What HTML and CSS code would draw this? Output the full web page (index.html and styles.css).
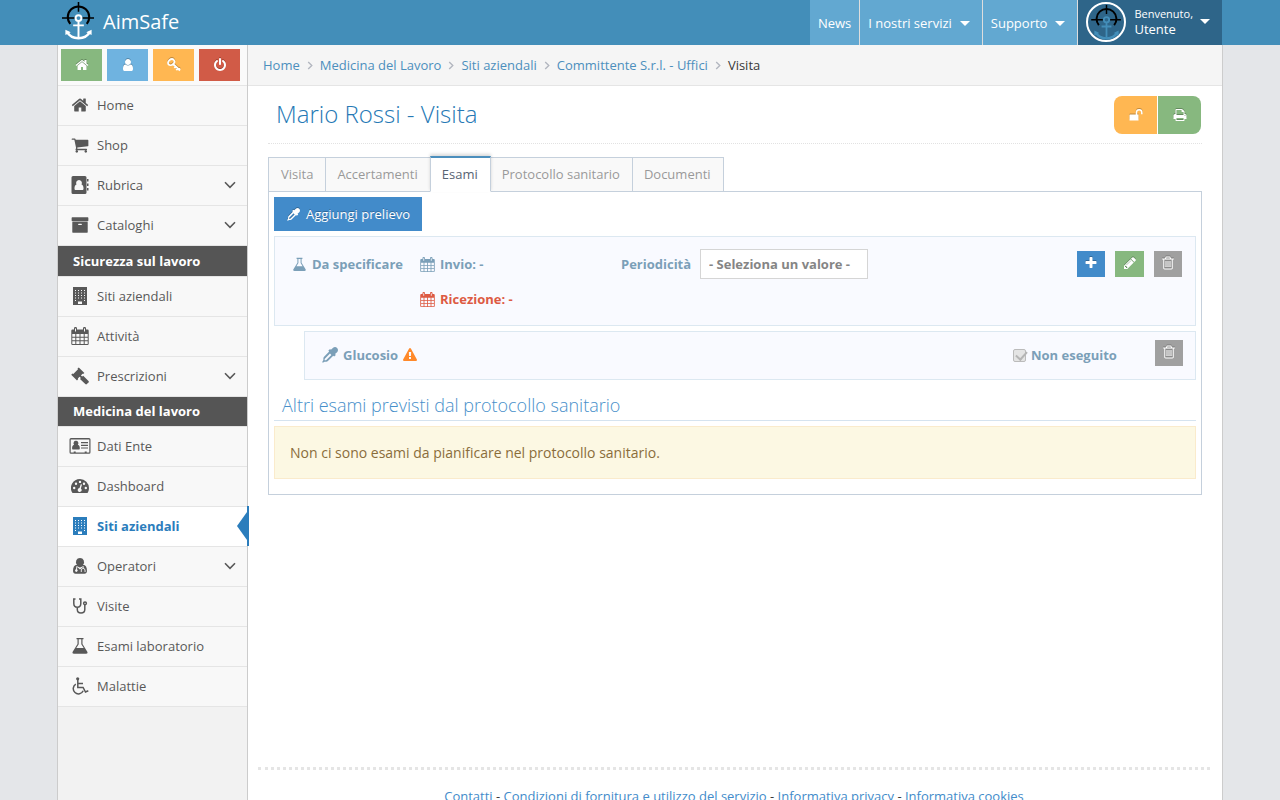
FILE: index.html
```html
<!DOCTYPE html>
<html lang="it">
<head>
<meta charset="utf-8">
<meta name="viewport" content="width=device-width, initial-scale=1">
<title>AimSafe - Visita</title>
<link rel="stylesheet" href="styles.css">
</head>
<body>
<svg class="sprite" aria-hidden="true">
  <symbol id="i-home" viewBox="0 0 1792 1792"><path d="M1472 992v480q0 26-19 45t-45 19h-384v-384h-256v384h-384q-26 0-45-19t-19-45v-480q0-1 .5-3t.5-3l575-474 575 474q1 2 1 6zm223-69l-62 74q-8 9-21 11h-3q-13 0-21-7l-692-577-692 577q-12 8-24 7-13-2-21-11l-62-74q-8-10-7-23.5t11-21.5l719-599q32-26 76-26t76 26l244 204v-195q0-14 9-23t23-9h192q14 0 23 9t9 23v408l219 182q10 8 11 21.5t-7 23.5z"/></symbol>
  <symbol id="i-user" viewBox="0 0 1792 1792"><path d="M1536 1399q0 109-62.5 187t-150.5 78h-854q-88 0-150.5-78t-62.5-187q0-85 8.5-160.5t31.5-152 58.5-131 94-89 134.5-34.5q131 128 313 128t313-128q76 0 134.5 34.5t94 89 58.5 131 31.5 152 8.5 160.5zm-256-887q0 159-112.5 271.5t-271.5 112.5-271.5-112.5-112.5-271.5 112.5-271.5 271.5-112.5 271.5 112.5 112.5 271.5z"/></symbol>
  <symbol id="i-key" viewBox="0 0 14 14"><g fill="none" stroke="currentColor" stroke-width="1.800"><ellipse cx="4.200" cy="4.200" rx="3.400" ry="2.700" transform="rotate(-40 4.200 4.200)"/><path d="M6 6l7 6.500M9.300 12.200l2.200-2.400M7.400 10l1.800-1.900M13 10.400l-1.600 1.800"/></g></symbol>
  <symbol id="i-power" viewBox="0 0 1792 1792"><path d="M1664 896q0 156-61 298t-164 245-245 164-298 61-298-61-245-164-164-245-61-298q0-182 80.5-343t226.5-270q43-32 95.5-25t83.5 50q32 42 24.5 94.5t-49.5 84.5q-98 74-151.5 181t-53.5 228q0 104 40.5 198.5t109.5 163.5 163.5 109.5 198.5 40.5 198.5-40.5 163.5-109.5 109.5-163.5 40.5-198.5q0-121-53.5-228t-151.5-181q-42-32-49.5-84.5t24.5-94.5q31-43 84-50t95 25q146 109 226.5 270t80.5 343zm-640-768v640q0 52-38 90t-90 38-90-38-38-90v-640q0-52 38-90t90-38 90 38 38 90z"/></symbol>
  <symbol id="i-cart" viewBox="0 0 1792 1792"><path d="M704 1536q0 52-38 90t-90 38-90-38-38-90 38-90 90-38 90 38 38 90zm896 0q0 52-38 90t-90 38-90-38-38-90 38-90 90-38 90 38 38 90zm128-1088v512q0 24-16.5 42.5t-40.5 21.5l-1044 122q13 60 13 70 0 16-24 64h920q26 0 45 19t19 45-19 45-45 19h-1024q-26 0-45-19t-19-45q0-11 8-31.5t16-36 21.5-40 15.5-29.5l-177-823h-204q-26 0-45-19t-19-45 19-45 45-19h256q16 0 28.5 6.5t19.5 15.5 13 24.5 8 26 5.5 29.5 4.5 26h1201q26 0 45 19t19 45z"/></symbol>
  <symbol id="i-book" viewBox="0 0 18 18"><path fill-rule="evenodd" d="M2 0h12a1.500 1.500 0 0 1 1.500 1.500v15a1.500 1.500 0 0 1-1.500 1.500H2A1.500 1.500 0 0 1 .5 16.500v-15A1.500 1.500 0 0 1 2 0zm6 4a3 3 0 0 0-2.500 4.500C4 9 3.500 10.500 3.500 12.500c0 1 .5 1.500 1.200 1.500h6.600c.7 0 1.200-.5 1.200-1.500 0-2-.5-3.500-2-4A3 3 0 0 0 8 4z"/><path d="M16 3h1.500v2.500H16zM16 7.500h1.500V10H16zM16 12h1.500v2.500H16z"/></symbol>
  <symbol id="i-archive" viewBox="0 0 1792 1792"><path d="M1088 832q0-26-19-45t-45-19h-256q-26 0-45 19t-19 45 19 45 45 19h256q26 0 45-19t19-45zm576-192v960q0 26-19 45t-45 19h-1408q-26 0-45-19t-19-45v-960q0-26 19-45t45-19h1408q26 0 45 19t19 45zm64-448v256q0 26-19 45t-45 19h-1536q-26 0-45-19t-19-45v-256q0-26 19-45t45-19h1536q26 0 45 19t19 45z"/></symbol>
  <symbol id="i-building" viewBox="0 0 18 18"><path fill-rule="evenodd" d="M2 0h14v18H2zM4 3v1h1V3zm3 0v1h1V3zm3 0v1h1V3zm3 0v1h1V3zM4 5.500v1h1v-1zm3 0v1h1v-1zm3 0v1h1v-1zm3 0v1h1v-1zM4 8v1h1V8zm3 0v1h1V8zm3 0v1h1V8zm3 0v1h1V8zM4 10.500v1h1v-1zm3 0v1h1v-1zm3 0v1h1v-1zm3 0v1h1v-1zM4 13v1h1v-1zm9 0v1h1v-1zM7 14.500V17h4v-2.500z"/></symbol>
  <symbol id="i-calendar" viewBox="0 0 18 18"><path fill-rule="evenodd" d="M1.500 2.500H3V1.300a1.300 1.300 0 0 1 1.300-1.300h.4A1.300 1.300 0 0 1 6 1.300v1.200h6V1.300A1.300 1.300 0 0 1 13.300 0h.4A1.300 1.300 0 0 1 15 1.300v1.200h1.500A1.200 1.200 0 0 1 17.700 3.700v13.100a1.200 1.200 0 0 1-1.200 1.200h-15A1.200 1.200 0 0 1 .3 16.800V3.700a1.200 1.200 0 0 1 1.200-1.200zM1.300 7v2.800h3V7zm4 0v2.800h3.200V7zm4.200 0v2.800h3.200V7zm4.200 0v2.800h3V7zM1.300 10.700v2.600h3v-2.600zm4 0v2.600h3.200v-2.600zm4.200 0v2.600h3.200v-2.600zm4.200 0v2.600h3v-2.600zM1.300 14.200V17h3v-2.800zm4 0V17h3.200v-2.800zm4.200 0V17h3.200v-2.800zm4.200 0V17h3v-2.800zM4 1.400v3h1v-3zm9 0v3h1v-3z"/></symbol>
  <symbol id="i-gavel" viewBox="0 0 18 18"><path d="M7.800.4l5.600 5.500-1.300 1.200-.6-.4-1.600 1.700 1.300 1.200 1-.9 5.300 5.200c.5.600.5 1 0 1.500l-1.600 1.700c-.5.500-1.100.5-1.600 0L9 12l.9-1-1.300-1.300-1.800 1.700.5.700L6 13.400.2 7.700l1.300-1.300.8.500 4.700-4.700-.5-.6z"/></symbol>
  <symbol id="i-card" viewBox="0 0 22 18"><path fill-rule="evenodd" d="M2 1h18a1.500 1.500 0 0 1 1.500 1.500v12.800a1.500 1.500 0 0 1-1.500 1.500H2a1.500 1.500 0 0 1-1.500-1.500V2.500A1.500 1.500 0 0 1 2 1zm-.3 1.400v13h3v-1h2v1h9v-1h2v1h2.600v-13z"/><path d="M7 3.800a2.400 2.400 0 0 1 1.800 4c1.500.5 2 1.500 2 3.700 0 .6-.4 1-.9 1H4c-.5 0-.9-.4-.9-1 0-2.200.5-3.200 2-3.700A2.400 2.400 0 0 1 7 3.800zM12 5h7v1.200h-7zM12 7.700h7v1.200h-7zM12 10.400h7v1.200h-7z"/></symbol>
  <symbol id="i-dash" viewBox="0 0 18 18"><path fill-rule="evenodd" d="M9 2a9 9 0 0 1 9 9c0 1.800-.5 3.300-1.300 4.700-.2.200-.4.300-.7.300H2c-.3 0-.5-.1-.7-.3A9 9 0 0 1 9 2zM3.200 9.800a1.200 1.200 0 1 0 0 2.400 1.200 1.200 0 0 0 0-2.400zM5 5.500A1.200 1.200 0 1 0 5 7.900a1.200 1.200 0 0 0 0-2.400zM9 3.700A1.200 1.200 0 1 0 9 6.100a1.200 1.200 0 0 0 0-2.400zM13 5.500a1.200 1.200 0 1 0 0 2.400 1.200 1.200 0 0 0 0-2.400zM14.800 9.800a1.200 1.200 0 1 0 0 2.400 1.200 1.200 0 0 0 0-2.400zM9.800 7.200L8.500 11a2 2 0 1 0 1.400.4L11 7.600z"/></symbol>
  <symbol id="i-doctor" viewBox="0 0 18 18"><path fill-rule="evenodd" d="M9 1a4 4 0 0 1 3 6.700c2.800.2 4 2.300 4 6.300 0 1.600-1 2.700-2.500 2.700h-9C3 16.700 2 15.600 2 14c0-4 1.200-6.100 4-6.300A4 4 0 0 1 9 1zM5.500 9l-.5 3.200a1.300 1.300 0 1 0 1 .1L6.300 10 9 12.500l2.800-2.500v1.300c-1.200.2-2 1-2 2.200v1.600h.9v-1.600c0-1 .7-1.400 1.500-1.400s1.400.4 1.400 1.400v1.600h.9v-1.600c0-1.200-.8-2-1.900-2.200V9L9 10.600z"/></symbol>
  <symbol id="i-steth" viewBox="0 0 18 18"><g fill="none" stroke="currentColor" stroke-width="1.500"><path d="M4.500 2H2.800v4.500c0 2.300 1.500 3.700 3.500 3.700s3.500-1.400 3.500-3.700V2H8M6.300 10.200v2.300c0 2.200 1.500 3.500 3.700 3.500s3.800-1.300 3.800-3.500V8"/><circle cx="14" cy="6.300" r="1.400"/></g></symbol>
  <symbol id="i-flask" viewBox="0 0 18 18"><path fill-rule="evenodd" d="M5.500 1h7v1.300h-1V7l4.800 7.800c.6 1 .1 2-1.200 2H2.900c-1.300 0-1.800-1-1.200-2L6.500 7V2.300h-1zm2.200 1.300v5L5.300 11h7.400l-2.400-3.700v-5z"/></symbol>
  <symbol id="i-wheel" viewBox="0 0 18 18"><circle cx="6.700" cy="1.800" r="1.600"/><path fill="none" stroke="currentColor" stroke-width="1.500" d="M6.800 3v7.400h5.300l2.400 4.600 2.800-1.200M7 6.400h5M4.800 7.200a5.200 5.200 0 1 0 7.400 6.600"/></symbol>
  <symbol id="i-unlock" viewBox="0 0 14 14"><path d="M1 6.500h8.500V12.500H.5V7z"/><path fill="none" stroke="currentColor" stroke-width="1.500" d="M7.500 7V4.300C7.500 2.700 8.700 1.700 10.200 1.700s2.600 1 2.600 2.600v2"/></symbol>
  <symbol id="i-print" viewBox="0 0 1792 1792"><path d="M448 1536h896v-256h-896v256zm0-640h896v-384h-160q-40 0-68-28t-28-68v-160h-640v640zm1152 64q0-26-19-45t-45-19-45 19-19 45 19 45 45 19 45-19 19-45zm128 0v416q0 13-9.500 22.500t-22.500 9.500h-224v160q0 40-28 68t-68 28h-960q-40 0-68-28t-28-68v-160h-224q-13 0-22.500-9.500t-9.500-22.500v-416q0-79 56.500-135.500t135.500-56.500h64v-544q0-40 28-68t68-28h672q40 0 88 20t76 48l152 152q28 28 48 76t20 88v256h64q79 0 135.500 56.500t56.500 135.500z"/></symbol>
  <symbol id="i-dropper" viewBox="0 0 14 14"><path fill-rule="evenodd" d="M13.200.8c1.100 1.100 1 2.700 0 3.700l-1.800 1.700.7.700-1.500 1.500-.8-.8-4.600 4.600c-.4.400-.9.600-1.400.6H2.300L.7 13.700l-.5-.5 1-1.900V9.900c0-.5.200-1 .6-1.400l4.500-4.500-.8-.8L7 1.800l.8.700L9.500.8c1-1 2.700-1.100 3.700 0zM3.500 11.700l4.700-4.800-1.200-1.200-4.700 4.700v1.300z"/></symbol>
  <symbol id="i-plus" viewBox="0 0 1792 1792"><path d="M1600 736v192q0 40-28 68t-68 28h-416v416q0 40-28 68t-68 28h-192q-40 0-68-28t-28-68v-416h-416q-40 0-68-28t-28-68v-192q0-40 28-68t68-28h416v-416q0-40 28-68t68-28h192q40 0 68 28t28 68v416h416q40 0 68 28t28 68z"/></symbol>
  <symbol id="i-pencil" viewBox="0 0 1792 1792"><path d="M491 1536l91-91-235-235-91 91v107h128v128h107zm523-928q0-22-22-22-10 0-17 7l-542 542q-7 7-7 17 0 22 22 22 10 0 17-7l542-542q7-7 7-17zm-54-192l416 416-832 832h-416v-416zm683 96q0 53-37 90l-166 166-416-416 166-165q36-38 90-38 53 0 91 38l235 234q37 39 37 91z"/></symbol>
  <symbol id="i-trash" viewBox="0 0 14 14"><path fill-rule="evenodd" d="M4.800.5h4.400l.9 2h2.700v1.100h-1v8.200c0 1-.6 1.700-1.400 1.700H3.600c-.8 0-1.400-.7-1.400-1.700V3.600h-1V2.500h2.700zm.6 1l-.4 1h4l-.4-1zM3.200 3.600v8.300c0 .4.200.6.500.6h6.600c.3 0 .5-.2.500-.6V3.600z"/><path d="M4.500 5h1v6h-1zM6.500 5h1v6h-1zM8.500 5h1v6h-1z"/></symbol>
  <symbol id="i-warn" viewBox="0 0 1792 1792"><path d="M1024 1375v-190q0-14-9.500-23.500t-22.500-9.500h-192q-13 0-22.500 9.500t-9.500 23.500v190q0 14 9.500 23.500t22.500 9.500h192q13 0 22.500-9.500t9.500-23.500zm-2-374l18-459q0-12-10-19-13-11-24-11h-220q-11 0-24 11-10 7-10 21l17 457q0 10 10 16.500t24 6.500h185q14 0 23.500-6.500t10.500-16.500zm-14-934l768 1408q35 63-2 126-17 29-46.500 46t-63.500 17h-1536q-34 0-63.500-17t-46.500-46q-37-63-2-126l768-1408q17-31 47-49t65-18 65 18 47 49z"/></symbol>
  <symbol id="i-down" viewBox="0 0 12 8"><path fill="none" stroke="currentColor" stroke-width="1.600" d="M1 1.300l5 5 5-5"/></symbol>
  <symbol id="i-right" viewBox="0 0 6 10"><path fill="none" stroke="currentColor" stroke-width="1.500" d="M1 1l4 4-4 4"/></symbol>
  <symbol id="i-logo" viewBox="0 0 34 40"><g fill="none"><path stroke="#000" stroke-width="2.200" d="M8.500 23.500A11 11 0 1 1 25.500 23.500"/><path stroke="#000" stroke-width="1.600" d="M17 1v10M0 17.500h13M21 17.500h12"/><g stroke="currentColor" stroke-width="2"><circle cx="17" cy="17.500" r="3"/><path d="M17 21v16.500M11.500 25h11"/><path stroke-width="2.600" d="M5 31.500c3 5.500 7 6.700 12 6.700s9-1.200 12-6.700"/></g><path fill="currentColor" d="M3.500 35V29.500l5.500 2.700zM30.500 35V29.500L25 32.200z"/></g></symbol>
</svg>

<header class="navbar">
  <div class="navbar-inner">
    <a class="brand" href="#"><svg class="brand-logo"><use href="#i-logo"/></svg>AimSafe</a>
    <nav class="topnav">
      <a href="#">News</a>
      <a href="#">I nostri servizi<span class="caret"></span></a>
      <a href="#">Supporto<span class="caret"></span></a>
      <a class="user" href="#">
        <span class="avatar"><svg><use href="#i-logo"/></svg></span>
        <span class="user-name"><small>Benvenuto,</small>Utente</span>
        <span class="caret"></span>
      </a>
    </nav>
  </div>
</header>

<div class="shell">
  <aside class="sidebar">
    <div class="shortcuts">
      <button class="sc green" type="button" aria-label="Home"><svg><use href="#i-home"/></svg></button>
      <button class="sc blue" type="button" aria-label="Profilo"><svg><use href="#i-user"/></svg></button>
      <button class="sc orange" type="button" aria-label="Password"><svg><use href="#i-key"/></svg></button>
      <button class="sc red" type="button" aria-label="Esci"><svg><use href="#i-power"/></svg></button>
    </div>
    <nav class="menu">
      <a href="#"><svg class="mi"><use href="#i-home"/></svg>Home</a>
      <a href="#"><svg class="mi"><use href="#i-cart"/></svg>Shop</a>
      <a href="#"><svg class="mi"><use href="#i-book"/></svg>Rubrica<svg class="chev"><use href="#i-down"/></svg></a>
      <a href="#"><svg class="mi"><use href="#i-archive"/></svg>Cataloghi<svg class="chev"><use href="#i-down"/></svg></a>
      <h2>Sicurezza sul lavoro</h2>
      <a href="#"><svg class="mi"><use href="#i-building"/></svg>Siti aziendali</a>
      <a href="#"><svg class="mi"><use href="#i-calendar"/></svg>Attività</a>
      <a href="#"><svg class="mi"><use href="#i-gavel"/></svg>Prescrizioni<svg class="chev"><use href="#i-down"/></svg></a>
      <h2>Medicina del lavoro</h2>
      <a href="#"><svg class="mi wide"><use href="#i-card"/></svg>Dati Ente</a>
      <a href="#"><svg class="mi"><use href="#i-dash"/></svg>Dashboard</a>
      <a class="active" href="#"><svg class="mi"><use href="#i-building"/></svg>Siti aziendali</a>
      <a href="#"><svg class="mi"><use href="#i-doctor"/></svg>Operatori<svg class="chev"><use href="#i-down"/></svg></a>
      <a href="#"><svg class="mi"><use href="#i-steth"/></svg>Visite</a>
      <a href="#"><svg class="mi"><use href="#i-flask"/></svg>Esami laboratorio</a>
      <a href="#"><svg class="mi"><use href="#i-wheel"/></svg>Malattie</a>
    </nav>
  </aside>

  <div class="main">
    <nav class="breadcrumb">
      <a href="#">Home</a><svg><use href="#i-right"/></svg>
      <a href="#">Medicina del Lavoro</a><svg><use href="#i-right"/></svg>
      <a href="#">Siti aziendali</a><svg><use href="#i-right"/></svg>
      <a href="#">Committente S.r.l. - Uffici</a><svg><use href="#i-right"/></svg>
      <span>Visita</span>
    </nav>

    <main class="content">
      <div class="page-head">
        <h1>Mario Rossi - Visita</h1>
        <div class="group">
          <button class="orange" type="button" aria-label="Sblocca"><svg><use href="#i-unlock"/></svg></button>
          <button class="green" type="button" aria-label="Stampa"><svg><use href="#i-print"/></svg></button>
        </div>
      </div>

      <nav class="tabs">
        <a href="#">Visita</a>
        <a href="#">Accertamenti</a>
        <a class="current" href="#">Esami</a>
        <a href="#">Protocollo sanitario</a>
        <a href="#">Documenti</a>
      </nav>
      <div class="pane">
        <button class="add" type="button"><svg><use href="#i-dropper"/></svg>Aggiungi prelievo</button>

        <section class="box sample">
          <div class="field"><svg><use href="#i-flask"/></svg>Da specificare</div>
          <div class="dates">
            <div class="field"><svg><use href="#i-calendar"/></svg>Invio: -</div>
            <div class="field late"><svg><use href="#i-calendar"/></svg>Ricezione: -</div>
          </div>
          <div class="period">
            <label for="periodo">Periodicità</label>
            <select id="periodo"><option>- Seleziona un valore -</option></select>
          </div>
          <div class="actions">
            <button class="mini primary" type="button" aria-label="Aggiungi"><svg><use href="#i-plus"/></svg></button>
            <button class="mini green" type="button" aria-label="Modifica"><svg><use href="#i-pencil"/></svg></button>
            <button class="mini gray" type="button" aria-label="Elimina"><svg><use href="#i-trash"/></svg></button>
          </div>
        </section>

        <section class="box exam">
          <div class="field exam-name"><svg><use href="#i-dropper"/></svg>Glucosio<svg class="warn"><use href="#i-warn"/></svg></div>
          <div class="done"><input type="checkbox" id="noneseguito" checked disabled><label for="noneseguito">Non eseguito</label></div>
          <button class="mini gray" type="button" aria-label="Elimina"><svg><use href="#i-trash"/></svg></button>
        </section>

        <h2 class="subhead">Altri esami previsti dal protocollo sanitario</h2>
        <p class="alert">Non ci sono esami da pianificare nel protocollo sanitario.</p>
      </div>
    </main>

    <footer class="footer">
      <a href="#">Contatti</a> - <a href="#">Condizioni di fornitura e utilizzo del servizio</a> - <a href="#">Informativa privacy</a> - <a href="#">Informativa cookies</a>
    </footer>
  </div>
</div>
</body>
</html>
```
FILE: styles.css
```css
* { box-sizing: border-box; }
body {
  margin: 0;
  min-height: calc(100vh + 5px);
  display: flex;
  flex-direction: column;
  background: #e4e6e9;
  color: #393939;
  font: 13px/20px "Open Sans", sans-serif;
}
a { color: #4c8fbd; text-decoration: none; }
button, select, input { font: inherit; margin: 0; }
button { border: 0; padding: 0; color: #fff; cursor: pointer; display: flex; align-items: center; justify-content: center; }
button svg { filter: drop-shadow(0 -1px 0 rgba(0, 0, 0, .25)); }
svg { fill: currentColor; flex: none; width: 14px; height: 14px; display: block; }
.sprite { position: absolute; width: 0; height: 0; }

.green { background: #87b87f; }
.blue { background: #6fb3e0; }
.orange { background: #ffb752; }
.red { background: #d15b47; }
.primary { background: #428bca; }
.gray { background: #a0a0a0; }

/* top bar */
.navbar { background: #438eb9; }
.navbar-inner {
  width: calc(100% - 114px);
  max-width: 1166px;
  margin: 0 auto;
  padding-right: 1px;
  height: 45px;
  display: flex;
  justify-content: space-between;
}
.brand { display: flex; gap: 8px; padding-left: 5px; color: #fff; font-size: 20px; line-height: 43px; }
.brand-logo { width: 33px; height: 39px; margin-top: 1px; }
.topnav { display: flex; }
.topnav a {
  display: flex;
  align-items: center;
  padding: 1px 8px 0;
  background: #62a8d1;
  color: #fff;
  border-right: 1px solid #ddd;
}
.caret { border: 5px solid transparent; border-top-color: #fff; border-bottom: 0; margin: 0 4px 0 8px; }
.topnav .user { background: #2e6589; border-right: 0; padding: 0 8px 2px; }
.avatar {
  width: 40px;
  height: 40px;
  border: 2px solid #fff;
  border-radius: 50%;
  display: flex;
  align-items: center;
  justify-content: center;
  color: #438eb9;
  margin-right: 8px;
}
.avatar svg { width: 31px; height: 36px; }
.user-name { display: flex; flex-direction: column; line-height: 16px; }
.user-name small { font-size: 11px; line-height: 15px; }
.user .caret { margin-left: 7px; }

/* frame */
.shell {
  flex: 1;
  width: calc(100% - 114px);
  max-width: 1166px;
  margin: 0 auto;
  display: flex;
  background: #fff;
  border: solid #ccc;
  border-width: 0 1px;
}
.sidebar { flex: 0 0 190px; background: #f2f2f2; border-right: 1px solid #ccc; }
.shortcuts { display: flex; gap: 5px; padding: 4px 3px; background: #fafafa; border-bottom: 1px solid #e5e5e5; }
.sc { width: 41px; height: 32px; }
.menu a {
  position: relative;
  display: flex;
  align-items: center;
  gap: 8px;
  height: 40px;
  padding: 0 11px 2px 13px;
  background: #f8f8f8;
  border-bottom: 1px solid #e5e5e5;
  color: #585858;
}
.mi { width: 18px; height: 18px; overflow: visible; }
.wide { width: 22px; margin: 0 -2px; }
.chev { width: 12px; height: 8px; margin-left: auto; }
.menu h2 {
  margin: 0;
  padding: 0 15px;
  height: 31px;
  line-height: 30px;
  background: #555;
  border-bottom: 1px solid #e5e5e5;
  color: #fff;
  font-size: 13px;
  font-weight: 700;
}
.menu h2:last-of-type { height: 30px; line-height: 28px; }
.menu .active { background: #fff; color: #2b7dbc; font-weight: 700; }
.menu .active::before {
  content: "";
  position: absolute;
  right: 0;
  top: 5px;
  border: 14px solid transparent;
  border-right: 10px solid #2b7dbc;
  border-left: 0;
}
.menu .active::after { content: ""; position: absolute; right: -2px; top: -1px; bottom: 0; width: 2px; background: #2b7dbc; }

.main { flex: 1; min-width: 0; display: flex; flex-direction: column; }
.breadcrumb {
  display: flex;
  align-items: center;
  gap: 7px;
  height: 41px;
  padding: 0 15px;
  background: #f5f5f5;
  border-bottom: 1px solid #e5e5e5;
}
.breadcrumb svg { width: 6px; height: 9px; color: #b2b6bf; }
.content { flex: 1; padding: 10px 20px 24px; }
.page-head {
  display: flex;
  justify-content: space-between;
  height: 48px;
  margin-bottom: 12px;
  border-bottom: 1px dotted #e2e2e2;
}
.page-head h1 { margin: 0 8px; color: #2679b5; font-size: 24px; line-height: 36px; font-weight: 300; }
.group { display: flex; gap: 1px; margin-right: 1px; height: 38px; border-radius: 8px; overflow: hidden; }
.group button { width: 43px; }

.tabs { display: flex; align-items: flex-end; }
.tabs a {
  height: 35px;
  margin-bottom: -1px;
  margin-right: -1px;
  padding: 0 12px 0 11px;
  line-height: 33px;
  color: #999;
  background: #f9f9f9;
  border: 1px solid #c5d0dc;
}
.tabs a:first-child { padding-left: 12px; }
.tabs .current {
  position: relative;
  height: 36px;
  line-height: 32px;
  color: #576373;
  background: #fff;
  border-top: 2px solid #4c8fbd;
  border-bottom-color: #fff;
  box-shadow: 0 -2px 3px rgba(0, 0, 0, .15);
}
.pane { padding: 5px 5px 15px; border: 1px solid #c5d0dc; }
.add { height: 34px; padding: 0 12px 0 13px; gap: 6px; margin-bottom: 5px; background: #428bca; text-shadow: 0 -1px 0 rgba(0, 0, 0, .25); }
.add svg { width: 13px; height: 13px; }

.box { background: #f9faff; border: 1px solid #dce8f1; color: #7b9fb8; font-weight: 700; margin-bottom: 5px; }
.field { display: flex; align-items: center; gap: 5px; height: 30px; }
.field svg { width: 15px; height: 15px; }
.sample { display: grid; grid-template-columns: 128px 201px 1fr auto; padding: 12px 13px 11px 17px; }
.dates { display: grid; gap: 5px; }
.late { color: #dd5a43; }
.period { display: flex; align-items: center; gap: 5px; height: 30px; }
.period label { min-width: 74px; }
.period select {
  appearance: none;
  width: 168px;
  height: 30px;
  padding: 0 8px;
  background: #fff;
  border: 1px solid #d5d5d5;
  border-radius: 0;
  color: #858585;
}
.actions { display: flex; gap: 10px; padding-top: 2px; }
.mini { width: 28px; height: 26px; padding-bottom: 2px; }
.actions .green { width: 29px; }
.exam { display: flex; align-items: center; height: 49px; margin-left: 30px; padding: 0 12px 5px 17px; }
.exam-name { margin-right: auto; padding-top: 3px; }
.exam-name svg { width: 16px; height: 16px; }
.warn { color: #ff892a; }
.exam-name .warn { width: 14px; height: 14px; }
.done { display: flex; align-items: center; gap: 5px; width: 110px; padding-top: 4px; margin-right: 32px; }
.done input {
  appearance: none;
  position: relative;
  width: 13px;
  height: 13px;
  border: 1px solid #bbb;
  border-radius: 2px;
  background: #e4e4e4;
}
.done input::before {
  content: "";
  position: absolute;
  left: 4px;
  top: -1px;
  width: 5px;
  height: 9px;
  border: solid #b5b5b5;
  border-width: 0 2px 2px 0;
  transform: rotate(42deg);
}
.subhead { margin: 0 0 5px; padding: 5px 8px 0; color: #478fca; font-size: 18px; line-height: 30px; font-weight: 300; border-bottom: 1px solid #d5e3ef; }
.alert { margin: 0; padding: 15px; background: #fcf8e3; border: 1px solid #faebcc; color: #8a6d3b; font-size: 14px; line-height: 21px; }

.footer { margin: 0 12px 0 10px; padding-top: 17px; line-height: 18px; border-top: 3px dotted #e5e5e5; text-align: center; }
.footer a { color: #428bca; }
```
